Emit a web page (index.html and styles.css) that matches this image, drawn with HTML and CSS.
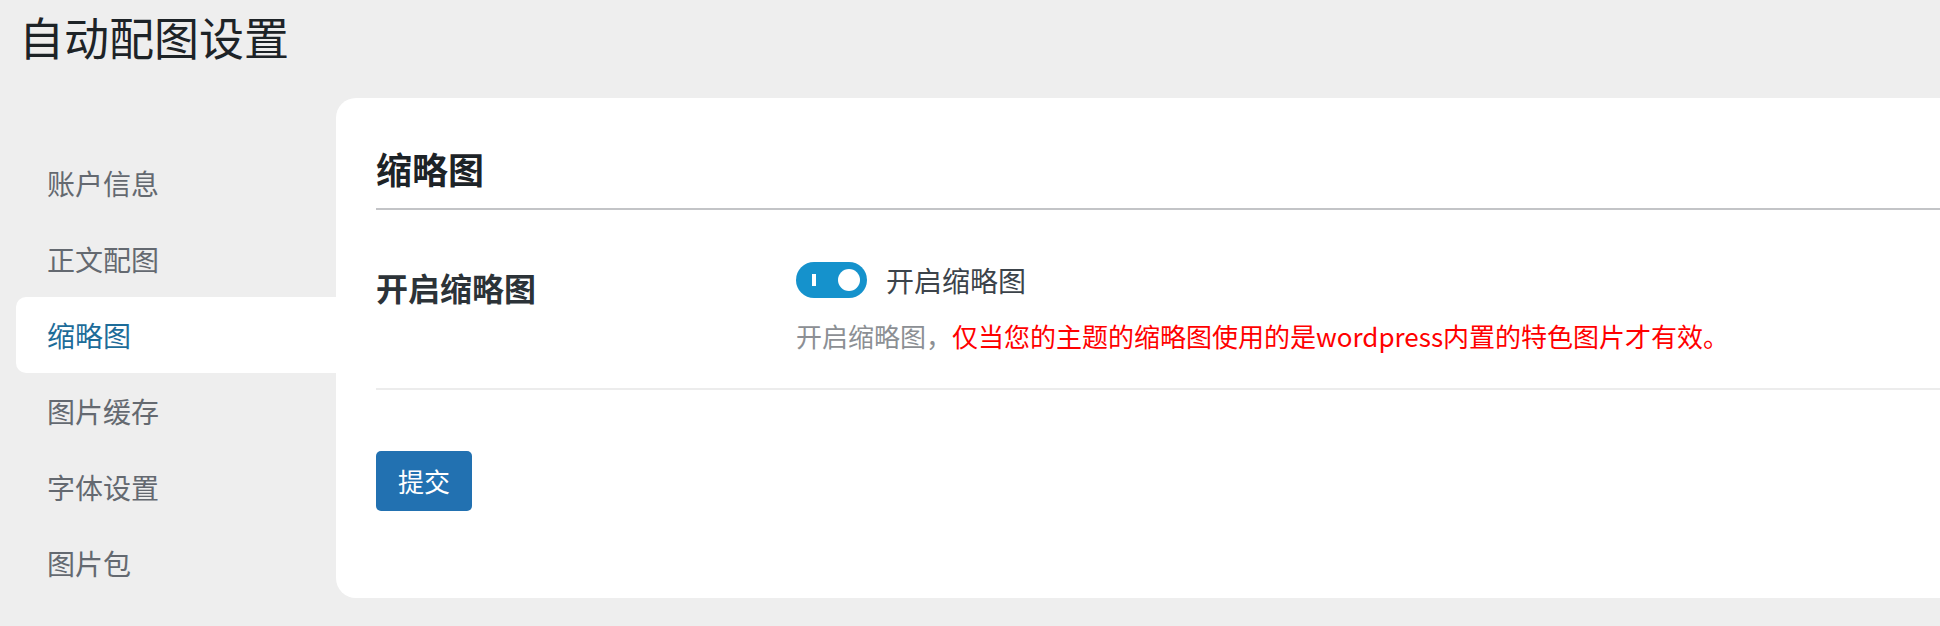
FILE: index.html
```html
<!DOCTYPE html>
<html lang="zh-CN">
<head>
<meta charset="utf-8">
<title>自动配图设置</title>
<link rel="stylesheet" href="styles.css">
</head>
<body>
<h1 class="page-title">自动配图设置</h1>
<div class="layout">
  <nav class="sidebar">
    <a class="nav-item">账户信息</a>
    <a class="nav-item">正文配图</a>
    <a class="nav-item active">缩略图</a>
    <a class="nav-item">图片缓存</a>
    <a class="nav-item">字体设置</a>
    <a class="nav-item">图片包</a>
  </nav>
  <main class="card">
    <h2 class="card-title">缩略图</h2>
    <div class="form-row">
      <div class="row-label">开启缩略图</div>
      <div class="row-field">
        <label class="toggle-line">
          <span class="toggle"><span class="toggle-mark"></span><span class="toggle-knob"></span></span>
          <span class="toggle-text">开启缩略图</span>
        </label>
        <p class="desc">开启缩略图，<span class="warn">仅当您的主题的缩略图使用的是wordpress内置的特色图片才有效。</span></p>
      </div>
    </div>
    <div class="actions">
      <button class="btn-primary" type="button">提交</button>
    </div>
  </main>
</div>
</body>
</html>
```
FILE: styles.css
```css
* { box-sizing: border-box; }
html, body { margin: 0; padding: 0; }
body {
  background: #eeeeee;
  font-family: "Noto Sans CJK SC", "Noto Sans", sans-serif;
  color: #1d2327;
  width: 1940px;
  height: 626px;
  overflow: hidden;
}
.page-title {
  margin: 10px 0 0 19px;
  font-size: 45px;
  line-height: 54px;
  font-weight: 400;
  color: #1d2327;
}
.layout {
  display: flex;
  margin-top: 34px;
}
.sidebar {
  width: 336px;
  flex: none;
  padding: 47px 0 0 16px;
  display: flex;
  flex-direction: column;
}
.nav-item {
  display: flex;
  align-items: center;
  height: 76px;
  padding-left: 31px;
  font-size: 28px;
  color: #646970;
  border-radius: 10px 0 0 10px;
}
.nav-item.active {
  background: #ffffff;
  color: #1d6c99;
}
.card {
  flex: 1;
  background: #ffffff;
  border-radius: 20px 0 0 20px;
  height: 500px;
  padding: 46px 0 0 40px;
}
.card-title {
  margin: 0;
  font-size: 36px;
  line-height: 48px;
  font-weight: 700;
  color: #1d2327;
  padding-bottom: 16px;
  border-bottom: 2px solid #c3c4c7;
}
.form-row {
  display: flex;
  padding: 52px 0 34px;
  border-bottom: 2px solid #ececec;
}
.row-label {
  width: 420px;
  flex: none;
  margin-top: 3px;
  font-size: 32px;
  line-height: 44px;
  font-weight: 700;
  color: #2c3338;
}
.row-field { flex: 1; }
.toggle-line {
  display: flex;
  align-items: center;
  gap: 19px;
  height: 36px;
}
.toggle {
  position: relative;
  width: 71px;
  height: 36px;
  border-radius: 18px;
  background: #1592cc;
  flex: none;
}
.toggle-mark {
  position: absolute;
  left: 16px;
  top: 12px;
  width: 4px;
  height: 12px;
  background: #ffffff;
}
.toggle-knob {
  position: absolute;
  right: 7px;
  top: 7px;
  width: 22px;
  height: 22px;
  border-radius: 50%;
  background: #ffffff;
}
.toggle-text {
  font-size: 28px;
  line-height: 36px;
  color: #3c434a;
}
.desc {
  margin: 20px 0 0;
  font-size: 26px;
  line-height: 36px;
  color: #8c8f94;
}
.warn { color: #ff0000; }
.actions { padding-top: 61px; }
.btn-primary {
  height: 60px;
  padding: 0 22px;
  border: none;
  border-radius: 5px;
  background: #2271b1;
  color: #ffffff;
  font-family: "Noto Sans CJK SC", sans-serif;
  font-size: 26px;
  line-height: 60px;
}
```
